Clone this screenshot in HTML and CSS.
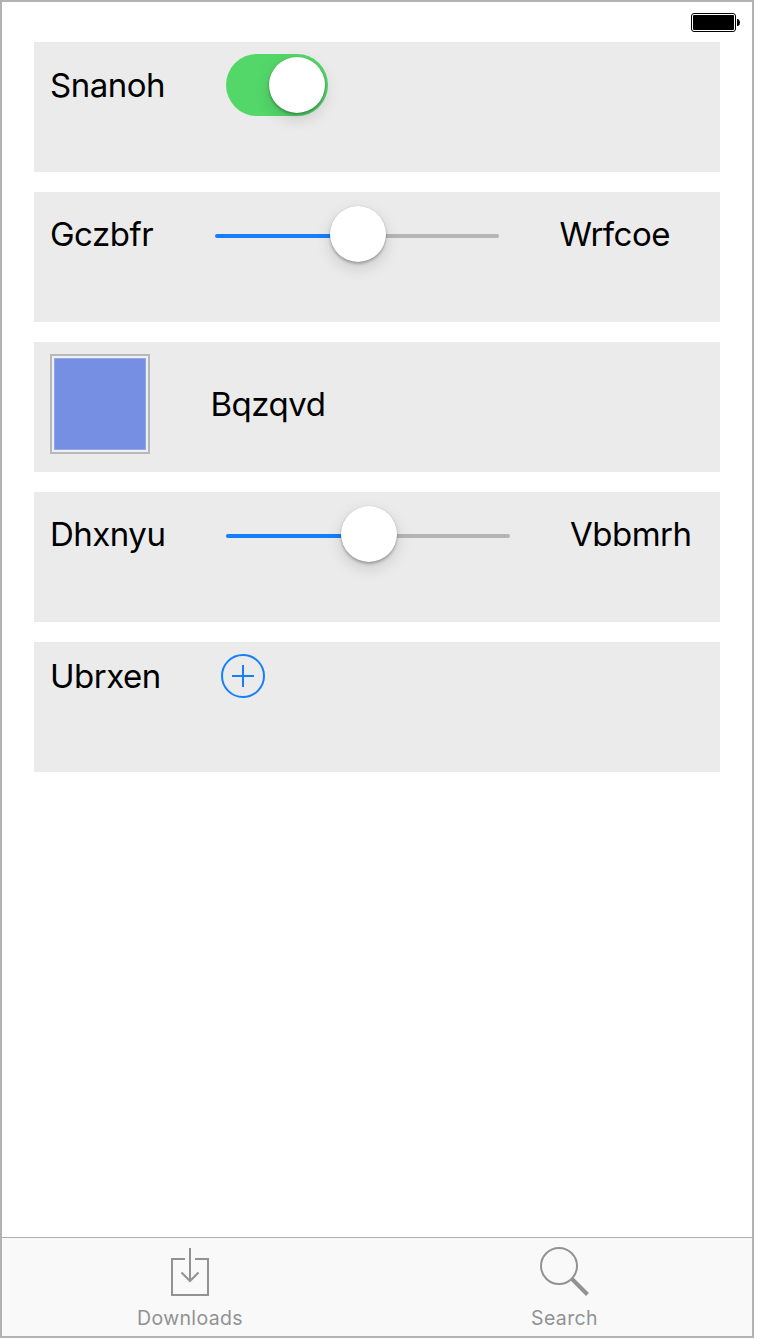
FILE: index.html
```html
<!DOCTYPE html>
<html lang="en">
<head>
<meta charset="utf-8">
<title>Downloads</title>
<link rel="stylesheet" href="styles.css">
</head>
<body>
<div class="screen">
  <header class="status">
    <svg width="50" height="20" viewBox="0 0 50 20">
      <rect x="0.5" y="0.5" width="44" height="18" rx="2.5" fill="#fff" stroke="#000"/>
      <rect x="2" y="2" width="41" height="15" rx="1" fill="#000"/>
      <path d="M46 6h1q2 1 2 3.500t-2 3.500h-1z" fill="#000"/>
    </svg>
  </header>
  <main class="rows">
    <section class="row">
      <span class="label snanoh">Snanoh</span>
      <div class="switch"><div class="knob"></div></div>
    </section>
    <section class="row slim">
      <span class="label gczbfr">Gczbfr</span>
      <div class="slider"><div class="fill"></div><div class="knob"></div><div class="rest"></div></div>
      <span class="label wrfcoe">Wrfcoe</span>
    </section>
    <section class="row">
      <div class="swatch"></div>
      <span class="label bqzqvd">Bqzqvd</span>
    </section>
    <section class="row slim">
      <span class="label dhxnyu">Dhxnyu</span>
      <div class="slider"><div class="fill"></div><div class="knob"></div><div class="rest"></div></div>
      <span class="label vbbmrh">Vbbmrh</span>
    </section>
    <section class="row">
      <span class="label ubrxen">Ubrxen</span>
      <svg class="add" width="44" height="44" viewBox="0 0 44 44" fill="none" stroke="#147efb" stroke-width="2">
        <circle cx="22" cy="22" r="21"/>
        <path d="M11 22h22M22 11v22"/>
      </svg>
    </section>
  </main>
  <nav class="tabs">
    <div class="tab">
      <svg width="52" height="52" viewBox="0 0 52 52" fill="none" stroke="#929292" stroke-width="2">
        <path d="M21 13H8v36h36V13H31M26 2v33M17.500 26.500l8.500 8.500 8.500-8.500"/>
      </svg>
      <span class="caption downloads">Downloads</span>
    </div>
    <div class="tab">
      <svg width="52" height="52" viewBox="0 0 52 52" fill="none" stroke="#929292">
        <circle cx="20" cy="20" r="18" stroke-width="2"/>
        <path d="M33 33l15.500 15.500" stroke-width="4"/>
      </svg>
      <span class="caption search">Search</span>
    </div>
  </nav>
</div>
</body>
</html>
```
FILE: styles.css
```css
body {
  margin: 0;
  background: #fff;
  font-family: Inter, "Liberation Sans", sans-serif;
}
svg { display: block; flex: none; }
.screen {
  box-sizing: border-box;
  width: 754px;
  height: 1338px;
  border: 2px solid #b2b2b2;
  display: flex;
  flex-direction: column;
}
.status {
  height: 40px;
  box-sizing: border-box;
  padding: 11px 11px 0 0;
  display: flex;
  justify-content: flex-end;
}
.rows {
  flex: 1;
  padding: 0 32px;
  display: flex;
  flex-direction: column;
  gap: 20px;
}
.row {
  box-sizing: border-box;
  height: 130px;
  padding: 12px 16px;
  background: #ebebeb;
  display: grid;
  grid-auto-flow: column;
  grid-template-rows: max-content;
  justify-content: start;
  align-items: center;
  align-content: start;
  column-gap: 60px;
}
.slim { grid-template-rows: 60px; }
.label {
  font-size: 33px;
  line-height: 40px;
  letter-spacing: -0.5px;
  color: #000;
  white-space: nowrap;
}
.snanoh, .dhxnyu { width: 116px; }
.gczbfr { width: 105px; }
.ubrxen { width: 111px; }
.wrfcoe, .bqzqvd { padding-left: 0.5px; }
.switch {
  box-sizing: border-box;
  width: 102px;
  height: 62px;
  padding: 3px;
  border-radius: 31px;
  background: #53d769;
  display: flex;
  justify-content: flex-end;
}
.knob {
  flex: none;
  width: 56px;
  height: 56px;
  border-radius: 50%;
  background: #fff;
  box-shadow: 0 6px 16px rgba(0, 0, 0, 0.14), 0 2px 3px rgba(0, 0, 0, 0.26), 0 0 1px rgba(0, 0, 0, 0.2);
}
.slider {
  width: 284px;
  height: 56px;
  display: flex;
  align-items: center;
}
.fill, .rest {
  height: 4px;
  margin-top: 4px;
}
.fill {
  width: 115px;
  background: #147efb;
  border-radius: 2px 0 0 2px;
}
.rest {
  width: 113px;
  background: #b5b5b5;
  border-radius: 0 2px 2px 0;
}
.slider .knob { z-index: 1; }
.swatch {
  box-sizing: border-box;
  width: 100px;
  height: 100px;
  border: 2px solid #b8b8b8;
  background: #768fe2;
  box-shadow: inset 0 0 0 2px #eff0f5, inset 0 0 0 3px #94a7e8;
}
.tabs {
  height: 99px;
  box-sizing: border-box;
  border-top: 1px solid #adadad;
  background: #f9f9f9;
  display: grid;
  grid-template-columns: 376px 374px;
}
.tab {
  padding-top: 8px;
  display: flex;
  flex-direction: column;
  align-items: center;
}
.caption {
  margin-top: 8px;
  font-size: 19.5px;
  line-height: 24px;
  letter-spacing: 0.35px;
  color: #929292;
}
.search { margin-right: 1px; }
```
